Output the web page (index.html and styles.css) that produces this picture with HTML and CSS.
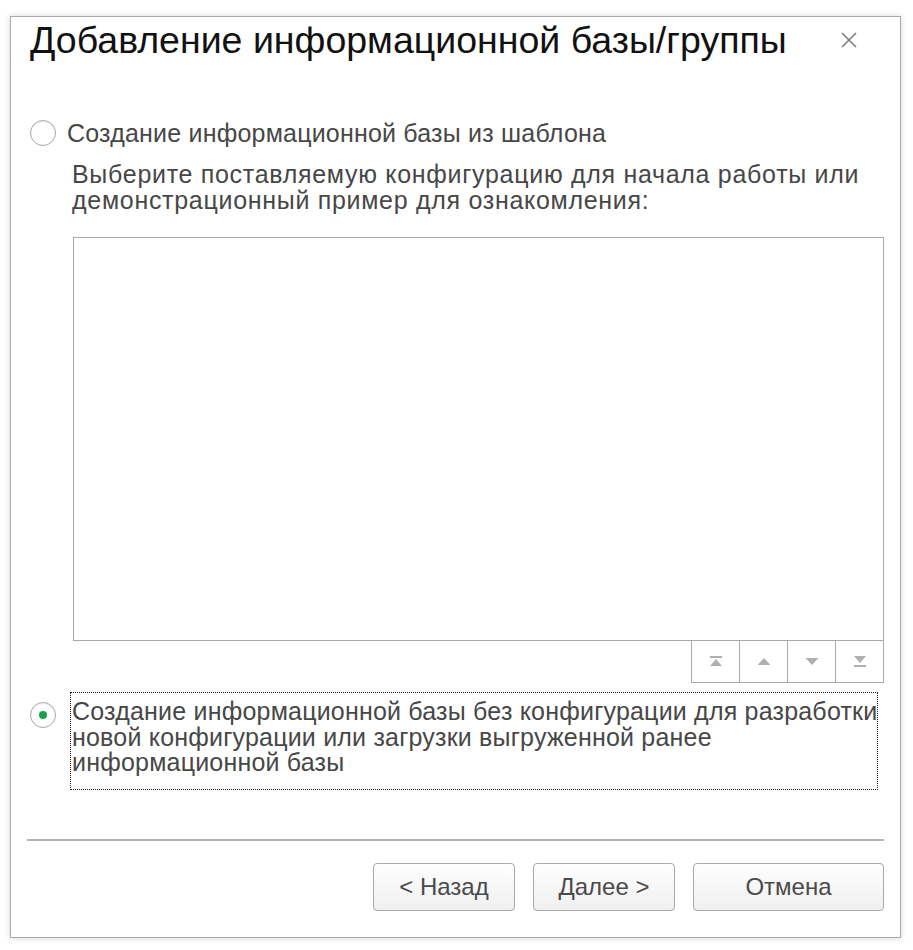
FILE: index.html
```html
<!DOCTYPE html>
<html lang="ru">
<head>
<meta charset="utf-8">
<title>Добавление информационной базы/группы</title>
<link rel="stylesheet" href="styles.css">
</head>
<body>
<div class="dialog">
  <div class="header">
    <div class="title">Добавление информационной базы/группы</div>
    <div class="close"><svg width="18" height="18" viewBox="0 0 18 18"><path d="M2 2 L16 16 M16 2 L2 16" stroke="#7a7a7a" stroke-width="1.5" fill="none"/></svg></div>
  </div>
  <div class="content">
    <div class="option option1">
      <span class="radio"></span>
      <span class="label">Создание информационной базы из шаблона</span>
    </div>
    <div class="hint">Выберите поставляемую конфигурацию для начала работы или<br>демонстрационный пример для ознакомления:</div>
    <div class="listwrap">
      <div class="listbox"></div>
      <div class="navbar">
        <span class="nav"><svg width="14" height="11" viewBox="0 0 14 11"><rect x="1" y="0" width="12" height="2" fill="#b0b0b0"/><polygon points="7,3 13,10 1,10" fill="#b0b0b0"/></svg></span>
        <span class="nav"><svg width="14" height="11" viewBox="0 0 14 11"><polygon points="7,2 13.5,9 0.5,9" fill="#b0b0b0"/></svg></span>
        <span class="nav"><svg width="14" height="11" viewBox="0 0 14 11"><polygon points="0.5,2 13.5,2 7,9" fill="#b0b0b0"/></svg></span>
        <span class="nav"><svg width="14" height="11" viewBox="0 0 14 11"><polygon points="1,0 13,0 7,7" fill="#b0b0b0"/><rect x="1" y="9" width="12" height="2" fill="#b0b0b0"/></svg></span>
      </div>
    </div>
    <div class="option option2">
      <span class="radio checked"></span>
      <span class="label focused">Создание информационной базы без конфигурации для разработки<br>новой конфигурации или загрузки выгруженной ранее<br>информационной базы</span>
    </div>
  </div>
  <div class="separator"></div>
  <div class="footer">
    <button class="btn btn-back">&lt; Назад</button>
    <button class="btn btn-next">Далее &gt;</button>
    <button class="btn btn-cancel">Отмена</button>
  </div>
</div>
</body>
</html>
```
FILE: styles.css
```css
* { box-sizing: border-box; }
html, body { margin: 0; padding: 0; background: #fff; }
body {
  font-family: "Liberation Sans", Arial, sans-serif;
  width: 913px;
  height: 950px;
  overflow: hidden;
}
.dialog {
  margin: 16px 0 0 10px;
  width: 891px;
  height: 922px;
  border: 1px solid #a9a9a9;
  box-shadow: 0 0 6px rgba(0,0,0,0.16);
  background: #fff;
  display: flex;
  flex-direction: column;
}
.header {
  display: flex;
  align-items: center;
  justify-content: space-between;
  height: 46px;
  padding: 0 42px 0 19px;
}
.title {
  font-size: 37.5px;
  line-height: 44px;
  color: #111;
  white-space: nowrap;
}
.close {
  display: flex;
  width: 18px;
  height: 18px;
}
.content {
  padding: 0 16px 0 19px;
}
.option {
  display: flex;
  align-items: flex-start;
}
.option1 { margin-top: 57px; }
.radio {
  width: 26px;
  height: 26px;
  border: 1.5px solid #a8a8a8;
  border-radius: 50%;
  flex: none;
  position: relative;
  background: #fff;
  box-shadow: inset 0 1px 2px rgba(0,0,0,0.08);
}
.radio.checked::after {
  content: "";
  position: absolute;
  left: 7.5px;
  top: 7.5px;
  width: 8px;
  height: 8px;
  border-radius: 50%;
  background: #16a049;
}
.label {
  font-size: 25px;
  line-height: 26px;
  color: #474747;
  margin-left: 11px;
  white-space: nowrap;
  letter-spacing: 0.2px;
}
.hint {
  margin: 16px 0 0 42px;
  font-size: 25px;
  line-height: 25.5px;
  color: #474747;
  white-space: nowrap;
  letter-spacing: 0.7px;
}
.listwrap {
  margin: 24px 0 0 41px;
  display: flex;
  flex-direction: column;
  align-items: flex-end;
}
.listbox {
  width: 811px;
  height: 404px;
  border: 1px solid #a9a9a9;
  background: #fff;
}
.navbar {
  display: flex;
  border: 1px solid #a9a9a9;
  border-top: none;
}
.nav {
  width: 48px;
  height: 41px;
  display: flex;
  align-items: center;
  justify-content: center;
  border-left: 1px solid #a9a9a9;
}
.nav:first-child { border-left: none; width: 47px; }
.option2 { margin-top: 9px; }
.option2 .radio { margin-top: 10px; }
.label.focused {
  margin-left: 14px;
  border: 1px dotted #222;
  padding: 6px 0 13px 1px;
  width: 808px;
  line-height: 25.5px;
  height: 98px;
}
.separator {
  margin: 49px 16px 0 16px;
  height: 2px;
  background: #b4b4b4;
}
.footer {
  display: flex;
  justify-content: flex-end;
  gap: 18px;
  padding: 22px 16px 0 0;
}
.btn {
  height: 48px;
  font-family: "Liberation Sans", Arial, sans-serif;
  font-size: 24px;
  color: #4a4a4a;
  background: linear-gradient(#fefefe, #f0f0f0);
  border: 1px solid #a9a9a9;
  border-radius: 4px;
  padding: 0;
}
.btn-back, .btn-next { width: 142px; }
.btn-cancel { width: 191px; }
```
